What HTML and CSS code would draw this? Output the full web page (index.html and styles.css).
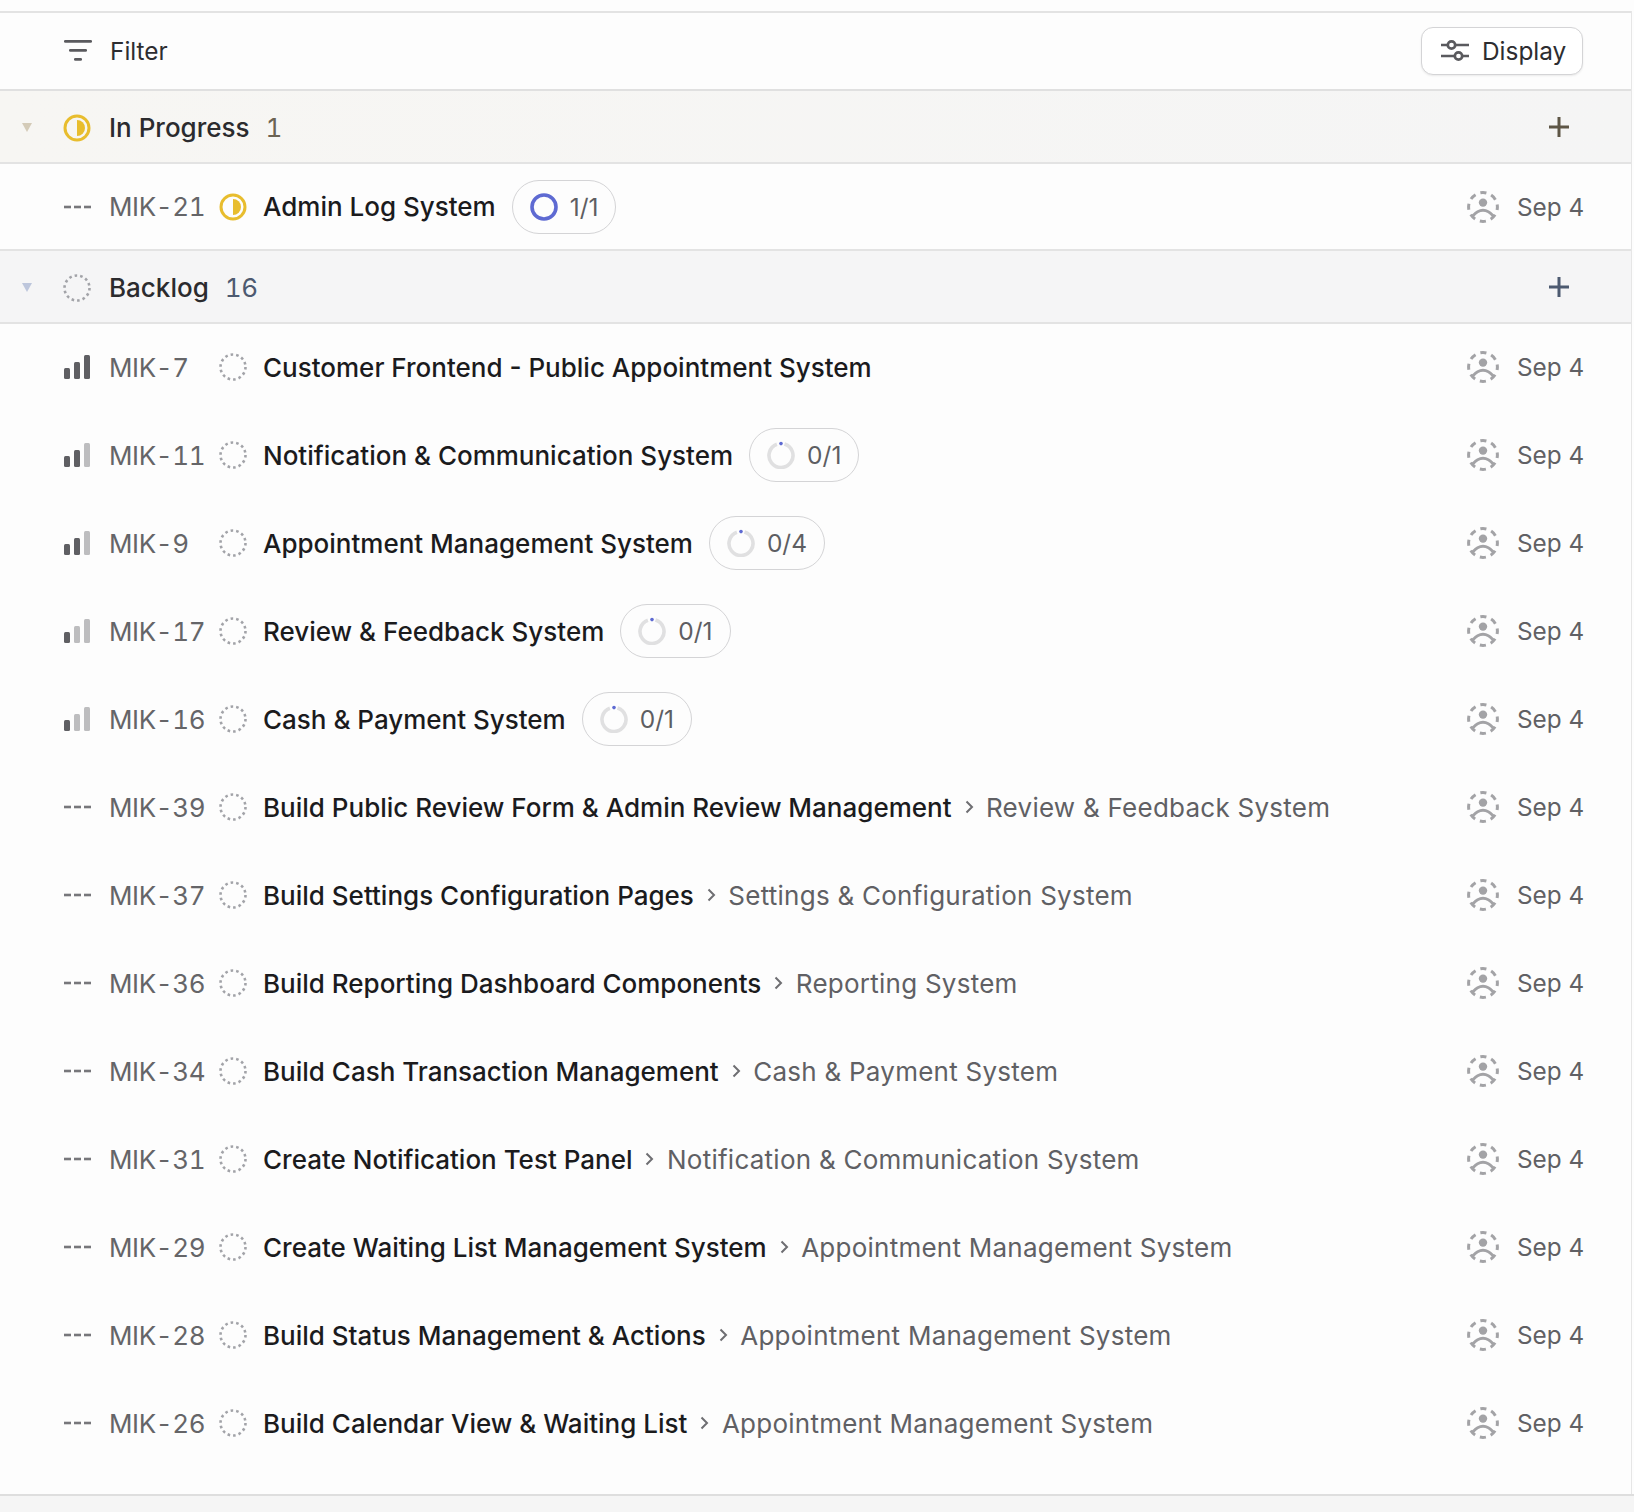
FILE: index.html
```html
<!DOCTYPE html>
<html lang="en">
<head>
<meta charset="utf-8">
<title>Issues</title>
<link rel="stylesheet" href="styles.css">
</head>
<body>
<svg class="defs" width="0" height="0" aria-hidden="true">
  <defs>
    <symbol id="backlog" viewBox="0 0 28 28"><circle cx="14" cy="14" r="12.5" fill="none" stroke="#a2a3a8" stroke-width="2.6" stroke-dasharray="2.6 3.01"/></symbol>
    <symbol id="progress" viewBox="0 0 28 28"><circle cx="14" cy="14" r="12" fill="none" stroke="#e8bd2e" stroke-width="3"/><path d="M14 6a8 8 0 0 1 0 16z" fill="#e8bd2e"/></symbol>
    <symbol id="none" viewBox="0 0 28 28"><g fill="#77777b"><rect x="1" y="12.7" width="7" height="2.6"/><rect x="11" y="12.7" width="7" height="2.6"/><rect x="21" y="12.7" width="7" height="2.6"/></g></symbol>
    <symbol id="pri3" viewBox="0 0 28 28"><g fill="#5f5f63"><rect x="1" y="15" width="6" height="11" rx="1.5"/><rect x="11" y="9" width="6" height="17" rx="1.5"/><rect x="21" y="2" width="6" height="24" rx="1.5"/></g></symbol>
    <symbol id="pri2" viewBox="0 0 28 28"><g fill="#5f5f63"><rect x="1" y="15" width="6" height="11" rx="1.5"/><rect x="11" y="9" width="6" height="17" rx="1.5"/></g><rect x="21" y="2" width="6" height="24" rx="1.5" fill="#bdbdbf"/></symbol>
    <symbol id="pri1" viewBox="0 0 28 28"><rect x="1" y="15" width="6" height="11" rx="1.5" fill="#5f5f63"/><g fill="#bdbdbf"><rect x="11" y="9" width="6" height="17" rx="1.5"/><rect x="21" y="2" width="6" height="24" rx="1.5"/></g></symbol>
    <symbol id="ring0" viewBox="0 0 28 28"><path d="M17.5 3a12 12 0 1 1-7.6.2" fill="none" stroke="#e0e0e1" stroke-width="3.6"/><circle cx="14" cy="2.6" r="1.8" fill="#5e6ad2"/></symbol>
    <symbol id="ring1" viewBox="0 0 28 28"><circle cx="14" cy="14" r="12" fill="none" stroke="#5e6ad2" stroke-width="3.6"/></symbol>
    <symbol id="avatar" viewBox="0 0 32 32"><circle cx="16" cy="16" r="14.4" fill="none" stroke="#a3a3a6" stroke-width="3" stroke-dasharray="6.2 5.1" stroke-dashoffset="3.1"/><circle cx="16" cy="11.6" r="4.2" fill="#a3a3a6"/><path d="M5.5 25.2c3-3.6 6.5-6 10.5-6s7.5 2.4 10.5 6" fill="none" stroke="#a3a3a6" stroke-width="3"/></symbol>
    <symbol id="sep" viewBox="0 0 12 16"><path d="M3.500 2.500L9 8l-5.500 5.500" fill="none" stroke="#6e6e72" stroke-width="2"/></symbol>
    <symbol id="plus" viewBox="0 0 20 20"><path d="M10 0v20M0 10h20" fill="none" stroke="currentColor" stroke-width="3"/></symbol>
  </defs>
</svg>
<main class="page">
  <div class="list">
  <header class="toolbar">
    <div class="filter">
      <svg class="filtericon" viewBox="0 0 28 22"><g fill="#5a5a5e"><rect x="0" y="0" width="28" height="2.7" rx="1.3"/><rect x="5" y="9" width="18" height="2.7" rx="1.3"/><rect x="10" y="18" width="8" height="2.7" rx="1.3"/></g></svg>
      <span>Filter</span>
    </div>
    <button class="display" type="button">
      <svg class="displayicon" viewBox="0 0 28 24"><g fill="none" stroke="#5a5a5e" stroke-width="2.7"><path d="M0 6h6.500M14.500 6H28M0 17h13.500M21.500 17H28"/><circle cx="10.500" cy="6" r="3.700"/><circle cx="17.500" cy="17" r="3.700"/></g></svg>
      <span>Display</span>
    </button>
  </header>

  <section class="group group-progress">
    <span class="caret"></span>
    <svg class="gicon"><use href="#progress"/></svg>
    <span class="gname">In Progress</span>
    <span class="gcount">1</span>
    <svg class="gplus"><use href="#plus"/></svg>
  </section>
  <div class="row row-first">
    <svg class="pri"><use href="#none"/></svg><span class="id">MIK-21</span><svg class="status"><use href="#progress"/></svg><span class="title">Admin Log System</span>
    <span class="pill"><svg class="ring"><use href="#ring1"/></svg>1/1</span>
    <span class="meta"><svg class="avatar"><use href="#avatar"/></svg><span class="date">Sep 4</span></span>
  </div>

  <section class="group group-backlog">
    <span class="caret"></span>
    <svg class="gicon"><use href="#backlog"/></svg>
    <span class="gname">Backlog</span>
    <span class="gcount">16</span>
    <svg class="gplus"><use href="#plus"/></svg>
  </section>

  <div class="row"><svg class="pri"><use href="#pri3"/></svg><span class="id">MIK-7</span><svg class="status"><use href="#backlog"/></svg><span class="title">Customer Frontend - Public Appointment System</span><span class="meta"><svg class="avatar"><use href="#avatar"/></svg><span class="date">Sep 4</span></span></div>
  <div class="row"><svg class="pri"><use href="#pri2"/></svg><span class="id">MIK-11</span><svg class="status"><use href="#backlog"/></svg><span class="title">Notification &amp; Communication System</span><span class="pill"><svg class="ring"><use href="#ring0"/></svg>0/1</span><span class="meta"><svg class="avatar"><use href="#avatar"/></svg><span class="date">Sep 4</span></span></div>
  <div class="row"><svg class="pri"><use href="#pri2"/></svg><span class="id">MIK-9</span><svg class="status"><use href="#backlog"/></svg><span class="title">Appointment Management System</span><span class="pill"><svg class="ring"><use href="#ring0"/></svg>0/4</span><span class="meta"><svg class="avatar"><use href="#avatar"/></svg><span class="date">Sep 4</span></span></div>
  <div class="row"><svg class="pri"><use href="#pri1"/></svg><span class="id">MIK-17</span><svg class="status"><use href="#backlog"/></svg><span class="title">Review &amp; Feedback System</span><span class="pill"><svg class="ring"><use href="#ring0"/></svg>0/1</span><span class="meta"><svg class="avatar"><use href="#avatar"/></svg><span class="date">Sep 4</span></span></div>
  <div class="row"><svg class="pri"><use href="#pri1"/></svg><span class="id">MIK-16</span><svg class="status"><use href="#backlog"/></svg><span class="title">Cash &amp; Payment System</span><span class="pill"><svg class="ring"><use href="#ring0"/></svg>0/1</span><span class="meta"><svg class="avatar"><use href="#avatar"/></svg><span class="date">Sep 4</span></span></div>
  <div class="row"><svg class="pri"><use href="#none"/></svg><span class="id">MIK-39</span><svg class="status"><use href="#backlog"/></svg><span class="title">Build Public Review Form &amp; Admin Review Management</span><svg class="sep"><use href="#sep"/></svg><span class="parent">Review &amp; Feedback System</span><span class="meta"><svg class="avatar"><use href="#avatar"/></svg><span class="date">Sep 4</span></span></div>
  <div class="row"><svg class="pri"><use href="#none"/></svg><span class="id">MIK-37</span><svg class="status"><use href="#backlog"/></svg><span class="title">Build Settings Configuration Pages</span><svg class="sep"><use href="#sep"/></svg><span class="parent">Settings &amp; Configuration System</span><span class="meta"><svg class="avatar"><use href="#avatar"/></svg><span class="date">Sep 4</span></span></div>
  <div class="row"><svg class="pri"><use href="#none"/></svg><span class="id">MIK-36</span><svg class="status"><use href="#backlog"/></svg><span class="title">Build Reporting Dashboard Components</span><svg class="sep"><use href="#sep"/></svg><span class="parent">Reporting System</span><span class="meta"><svg class="avatar"><use href="#avatar"/></svg><span class="date">Sep 4</span></span></div>
  <div class="row"><svg class="pri"><use href="#none"/></svg><span class="id">MIK-34</span><svg class="status"><use href="#backlog"/></svg><span class="title">Build Cash Transaction Management</span><svg class="sep"><use href="#sep"/></svg><span class="parent">Cash &amp; Payment System</span><span class="meta"><svg class="avatar"><use href="#avatar"/></svg><span class="date">Sep 4</span></span></div>
  <div class="row"><svg class="pri"><use href="#none"/></svg><span class="id">MIK-31</span><svg class="status"><use href="#backlog"/></svg><span class="title">Create Notification Test Panel</span><svg class="sep"><use href="#sep"/></svg><span class="parent">Notification &amp; Communication System</span><span class="meta"><svg class="avatar"><use href="#avatar"/></svg><span class="date">Sep 4</span></span></div>
  <div class="row"><svg class="pri"><use href="#none"/></svg><span class="id">MIK-29</span><svg class="status"><use href="#backlog"/></svg><span class="title">Create Waiting List Management System</span><svg class="sep"><use href="#sep"/></svg><span class="parent">Appointment Management System</span><span class="meta"><svg class="avatar"><use href="#avatar"/></svg><span class="date">Sep 4</span></span></div>
  <div class="row"><svg class="pri"><use href="#none"/></svg><span class="id">MIK-28</span><svg class="status"><use href="#backlog"/></svg><span class="title">Build Status Management &amp; Actions</span><svg class="sep"><use href="#sep"/></svg><span class="parent">Appointment Management System</span><span class="meta"><svg class="avatar"><use href="#avatar"/></svg><span class="date">Sep 4</span></span></div>
  <div class="row"><svg class="pri"><use href="#none"/></svg><span class="id">MIK-26</span><svg class="status"><use href="#backlog"/></svg><span class="title">Build Calendar View &amp; Waiting List</span><svg class="sep"><use href="#sep"/></svg><span class="parent">Appointment Management System</span><span class="meta"><svg class="avatar"><use href="#avatar"/></svg><span class="date">Sep 4</span></span></div>
  </div>
</main>
</body>
</html>
```
FILE: styles.css
```css
* { box-sizing: border-box; }
html, body { margin: 0; height: 100%; }
body {
  background: #f5f5f5;
  font-family: Inter, "Liberation Sans", sans-serif;
  font-size: 26px;
  color: #1f1f21;
  height: 1512px;
  overflow: hidden;
}
.defs { position: absolute; }
.page {
  height: 1496px;
  background: #fdfdfd;
  padding-top: 11px;
  border-bottom: 2px solid #dedede;
}
.list {
  width: 1632px;
  height: 100%;
  border-right: 1px solid #e6e6e6;
}
.toolbar {
  height: 80px;
  border-top: 2px solid #e3e3e3;
  border-bottom: 2px solid #e0e0e0;
  display: flex;
  align-items: center;
  justify-content: space-between;
  padding: 0 48px 0 64px;
  font-size: 24.4px;
}
.filter { display: flex; align-items: center; gap: 18px; color: #2d2d30; }
.filtericon { width: 28px; height: 22px; display: block; }
.displayicon { width: 28px; height: 24px; display: block; flex: none; }
.display {
  display: flex;
  align-items: center;
  gap: 13px;
  width: 162px;
  height: 48px;
  padding: 0 0 0 19px;
  background: #fff;
  border: 1px solid #d4d4d6;
  border-radius: 12px;
  box-shadow: 0 1px 2px rgba(0,0,0,.08);
  font: inherit;
  color: #2d2d30;
}
.group {
  height: 73px;
  border-bottom: 2px solid #e3e3e3;
  display: flex;
  align-items: center;
  padding: 2px 48px 0 0;
}
.group-progress { background: linear-gradient(90deg, #f7f6f3, #f5f5f5); }
.group-backlog { background: #f5f5f6; }
.caret {
  width: 0; height: 0;
  margin: 0 31px 0 22px;
  border-left: 5.5px solid transparent;
  border-right: 5.5px solid transparent;
  border-top: 9px solid #d4cbb8;
}
.group-backlog .caret { border-top-color: #bdc6dc; }
.gicon { width: 28px; height: 28px; flex: none; }
.gname { margin-left: 18px; color: #2b2b2e; font-weight: 450; }
.gcount { margin-left: 16px; color: #6c6353; font-variant-numeric: tabular-nums; letter-spacing: -.4px; }
.group-backlog .gcount { color: #4d5a70; }
.gplus { margin: -2px 14px 0 auto; width: 20px; height: 20px; color: #5e5646; flex: none; }
.group-backlog .gplus { color: #4d5a70; }
.row {
  height: 88px;
  display: flex;
  align-items: center;
  padding: 0 48px 2px 63px;
}
.row-first { height: 87px; padding-bottom: 0; border-bottom: 2px solid #e3e3e3; }
.pri { width: 28px; height: 28px; flex: none; }
.id { width: 110px; flex: none; margin-left: 18px; color: #656568; font-variant-numeric: tabular-nums; letter-spacing: -.4px; }
.status { width: 28px; height: 28px; flex: none; margin-right: 16px; }
.title { font-weight: 500; color: #1b1b1d; white-space: nowrap; }
.pill {
  margin-left: 16px;
  height: 54px;
  display: flex;
  align-items: center;
  gap: 12px;
  padding: 0 17px;
  border: 1px solid #d4d4d6;
  border-radius: 27px;
  color: #5e5e62;
  font-size: 24.5px;
}
.ring { width: 28px; height: 28px; flex: none; }
.sep { width: 12px; height: 16px; flex: none; margin: 0 11.5px 0 11px; }
.parent { color: #606064; white-space: nowrap; letter-spacing: .25px; }
.meta { margin-left: auto; display: flex; align-items: center; gap: 18px; }
.avatar { width: 32px; height: 32px; }
.date { color: #606064; width: 66px; white-space: nowrap; font-size: 24.3px; }
```
